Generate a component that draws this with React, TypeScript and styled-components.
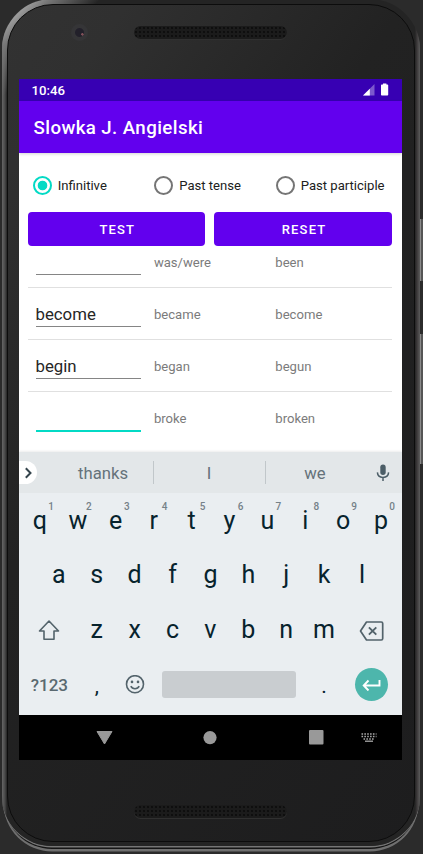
import React from "react";
import styled, { createGlobalStyle } from "styled-components";

const Global = createGlobalStyle`
  * { box-sizing: border-box; }
  body { margin: 0; background: #2b2b2b; font-family: Roboto, sans-serif; }
`;

const Desk = styled.main`
  position: relative;
  width: 423px;
  height: 854px;
  overflow: hidden;
  padding-left: 2px;
  background: #2b2b2b;
`;

const Phone = styled.div`
  position: relative;
  width: 418px;
  height: 847px;
  margin-top: -1px;
  padding: 5px;
  border-radius: 50px;
  background: linear-gradient(90deg, #666 0, #484848 3px, #242424 5px, #242424 413px, #3c393a 415px, #5c5c5c 418px);
  box-shadow: 0 1.5px 0 #757575, 0 5px 0 -2px #151515, 0 7px 0 -1.5px #707070;
  &::before {
    content: "";
    position: absolute;
    inset: 0;
    border-radius: 50px;
    background: linear-gradient(135deg, transparent 0, #9a9a9a 22px, #777 34px, transparent 70px);
  }
`;

const Face = styled.div`
  position: relative;
  display: flex;
  flex-direction: column;
  align-items: center;
  width: 408px;
  height: 838px;
  padding-right: 1px;
  border: 1px solid #0c0c0c;
  border-radius: 46px;
  background: linear-gradient(125deg, #323232 0, #303030 12%, #222 40%, #1d1d1e 100%);
`;

const SideKey = styled.div<{ $top: number; $height: number }>`
  position: absolute;
  left: 420px;
  top: ${(p) => p.$top}px;
  width: 3px;
  height: ${(p) => p.$height}px;
  border-left: 1px solid #8a8a8a;
  background: #555;
`;

const Forehead = styled.div`
  position: relative;
  height: 74px;
  width: 100%;
  flex: none;
  display: flex;
  justify-content: center;
  padding-top: 21px;
`;

const Camera = styled.div`
  position: absolute;
  left: 63px;
  top: 19px;
  width: 17px;
  height: 17px;
  border-radius: 50%;
  background: radial-gradient(circle at 67% 61%, #805058 0 1px, transparent 1.5px),
    radial-gradient(circle, #22202a 0 4px, #353537 5px 100%);
`;

const Grille = styled.div`
  width: 153px;
  height: 13px;
  border-radius: 7px;
  background: radial-gradient(circle, #0b0b0b 0.6px, transparent 1.1px) 0 0 / 4px 4px, #1b1b1b;
  box-shadow: 0 1px 0 #303030;
`;

const Chin = styled.div`
  padding-top: 45px;
`;

const Screen = styled.div`
  display: flex;
  flex-direction: column;
  width: 383px;
  height: 681px;
  flex: none;
  margin-right: 1px;
  background: #fff;
  overflow: hidden;
`;

const StatusBar = styled.div`
  display: flex;
  align-items: center;
  justify-content: space-between;
  height: 22px;
  flex: none;
  padding: 0 13px;
  background: #3700b3;
  color: #fff;
  font-size: 13.2px;
  font-weight: 500;
`;

const AppBar = styled.header`
  position: relative;
  display: flex;
  align-items: center;
  height: 52px;
  flex: none;
  padding: 2px 15px 0;
  background: #6200ee;
  color: #fff;
  font-size: 18.7px;
  font-weight: 500;
  letter-spacing: 0.4px;
  box-shadow: 0 1px 3px rgba(0, 0, 0, 0.18);
`;

const Content = styled.section`
  display: flex;
  flex-direction: column;
  height: 299px;
  flex: none;
  padding: 0 9.7px 0 9px;
  overflow: hidden;
`;

const RadioRow = styled.div`
  display: grid;
  grid-template-columns: 121.5px 121.5px 1fr;
  height: 59px;
  flex: none;
  padding: 5px 0 0 5.2px;
`;

const RadioLabel = styled.div`
  display: flex;
  align-items: center;
  gap: 6px;
  color: #202020;
  font-size: 13.1px;
  white-space: nowrap;
`;

const Dot = styled.span<{ $on?: boolean }>`
  width: 19px;
  height: 19px;
  flex: none;
  border: 2px solid ${(p) => (p.$on ? "#03dac5" : "#757575")};
  border-radius: 50%;
  background: ${(p) => (p.$on ? "radial-gradient(circle, #03dac5 4.4px, #fff 5.2px)" : "#fff")};
`;

const Buttons = styled.div`
  display: grid;
  grid-template-columns: 1fr 1fr;
  gap: 9.3px;
  height: 34.3px;
  flex: none;
`;

const Button = styled.button`
  padding: 0 0 0 2px;
  border: 0;
  border-radius: 4px;
  background: #6200ee;
  color: #fff;
  font: 500 13px Roboto, sans-serif;
  letter-spacing: 1.16px;
`;

const List = styled.div`
  display: flex;
  flex-direction: column;
  justify-content: flex-end;
  height: 198px;
  flex: none;
  overflow: hidden;
`;

const VerbRow = styled.div`
  display: grid;
  grid-template-columns: 126.4px 121.4px 1fr;
  height: 52.1px;
  flex: none;
  border-bottom: 1.4px solid #e0e0e0;
  &:last-child { border-bottom: 0; }
`;

const Field = styled.div<{ $active?: boolean }>`
  width: 105px;
  height: ${(p) => (p.$active ? 40 : 39.2)}px;
  margin-left: 8px;
  padding-top: 15.7px;
  border-bottom: ${(p) => (p.$active ? "2px solid #03dac5" : "1px solid #858585")};
  color: #262626;
  font-size: 16.8px;
  line-height: 20px;
`;

const Form = styled.div`
  padding-top: 17.6px;
  color: #7b7b7b;
  font-size: 13.1px;
  line-height: 17px;
`;

const Suggestions = styled.div`
  display: grid;
  grid-template-columns: 35px 100px 112px 100px 1fr;
  align-items: center;
  height: 41px;
  flex: none;
  background: #e3e7e9;
  box-shadow: 0 -1px 2px rgba(0, 0, 0, 0.08);
`;

const Expand = styled.div`
  display: flex;
  align-items: center;
  width: 18.5px;
  height: 23px;
  padding-left: 2px;
  border-radius: 0 12px 12px 0;
  background: #fff;
`;

const Word = styled.div<{ $divided?: boolean }>`
  height: 23px;
  border-right: 1px solid ${(p) => (p.$divided ? "#c1c7ca" : "transparent")};
  color: #65727a;
  font-size: 16.7px;
  line-height: 25px;
  text-align: center;
`;

const Mic = styled.div`
  display: flex;
  justify-content: center;
  padding-right: 1px;
`;

const Keyboard = styled.div`
  display: flex;
  flex-direction: column;
  height: 222px;
  flex: none;
  padding: 0 1.5px 0 2.5px;
  background: #eaeef1;
  box-shadow: 0 1px 0 #777;
`;

const KeyRow = styled.div<{ $h?: number; $inset?: number }>`
  display: flex;
  height: ${(p) => p.$h ?? 55}px;
  flex: none;
  padding: 0 ${(p) => p.$inset ?? 0}px;
`;

const Key = styled.div<{ $w?: number; $small?: boolean; $low?: boolean }>`
  position: relative;
  display: flex;
  align-items: center;
  justify-content: center;
  width: ${(p) => p.$w ?? 37.9}px;
  flex: none;
  padding-top: ${(p) => (p.$low ? 3 : 0)}px;
  color: ${(p) => (p.$small ? "#5a6970" : "#07232d")};
  font-size: ${(p) => (p.$small ? 17 : p.$low ? 21 : 25)}px;
  font-weight: ${(p) => (p.$small ? 500 : 400)};
`;

const Hint = styled.sup`
  position: absolute;
  left: 27.2px;
  top: 8px;
  color: #758188;
  font-size: 10px;
  font-weight: 500;
  line-height: 12px;
`;

const Space = styled.div`
  width: 134px;
  height: 27px;
  border-radius: 3px;
  background: #c9cdd0;
`;

const Enter = styled.div`
  display: flex;
  align-items: center;
  justify-content: center;
  width: 33px;
  height: 33px;
  border-radius: 50%;
  background: #4db6ac;
`;

const NavBar = styled.nav`
  display: grid;
  grid-template-columns: 53px 53px 53px 53px 53px 53px;
  padding-left: 59px;
  align-items: center;
  height: 45px;
  background: #000;
  > svg { justify-self: center; }
`;

const SignalIcon = () => (
  <svg width="26" height="14" viewBox="0 0 26 14">
    <path d="M11.5 1v11.5H0z" fill="#fff" fillOpacity=".35" />
    <path d="M6.8 5.8v6.7H0z" fill="#fff" />
    <path d="M20 1.5V.5h3.4v1h1c.5 0 .8.3.8.8v9.4c0 .5-.3.8-.8.8h-5.600c-.5 0-.8-.3-.8-.8V2.300c0-.5.3-.8.8-.8z" fill="#fff" />
  </svg>
);

const ChevronIcon = () => (
  <svg width="14" height="14" viewBox="0 0 14 14" fill="none" stroke="#34444c" strokeWidth="2">
    <path d="M4.800 2.200L9.500 7 4.800 11.800" />
  </svg>
);

const MicIcon = () => (
  <svg width="14" height="18" viewBox="0 0 14 18">
    <rect x="4.300" y=".6" width="5.400" height="10.400" rx="2.700" fill="#4c5e67" />
    <path d="M1.400 8.400c.2 3 2.500 5 5.600 5s5.400-2 5.600-5M7 13.500v3.500" fill="none" stroke="#4c5e67" strokeWidth="1.500" />
  </svg>
);

const ShiftIcon = () => (
  <svg width="22" height="22" viewBox="0 0 22 22" fill="none" stroke="#53636b" strokeWidth="1.600" strokeLinejoin="round">
    <path d="M11 2L1.500 12H6v8.300h10v-8.300h4.500z" />
  </svg>
);

const BackspaceIcon = () => (
  <svg width="25" height="22" viewBox="0 0 25 22" fill="none" stroke="#53636b" strokeWidth="1.700">
    <path d="M7.500 3h14.800q1.400 0 1.400 1.400v15.200q0 1.400-1.400 1.400H7.500L1.500 12z" strokeLinejoin="round" />
    <path d="M9.900 8.300l7.400 7.400M17.300 8.300L9.900 15.700" strokeWidth="1.900" />
  </svg>
);

const SmileIcon = () => (
  <svg width="20" height="20" viewBox="0 0 20 20" fill="none" stroke="#53636b" strokeWidth="1.600">
    <circle cx="10" cy="9.200" r="8.500" />
    <path d="M5.800 11.200c.8 1.700 2.300 2.600 4.200 2.600s3.400-.9 4.200-2.600" />
    <circle cx="7" cy="6.900" r="1.300" fill="#53636b" stroke="none" />
    <circle cx="13" cy="6.900" r="1.300" fill="#53636b" stroke="none" />
  </svg>
);

const EnterIcon = () => (
  <svg width="19" height="13" viewBox="0 0 19 13" fill="none" stroke="#fff" strokeWidth="1.900">
    <path d="M17.500 2v5.500H2.200M6.500 2.500L1.700 7.500l4.800 5" />
  </svg>
);

const BackIcon = () => (
  <svg width="17" height="15" viewBox="0 0 17 15">
    <path d="M1 1.500h15L8.500 14z" fill="#999" stroke="#999" strokeLinejoin="round" />
  </svg>
);

const HomeIcon = () => (
  <svg width="14" height="14" viewBox="0 0 14 14"><circle cx="7" cy="6.600" r="6.600" fill="#999" /></svg>
);

const RecentsIcon = () => (
  <svg width="15" height="15" viewBox="0 0 15 15"><rect width="14.500" height="14.500" rx="1" fill="#999" /></svg>
);

const KeyboardIcon = () => (
  <svg width="16" height="9" viewBox="0 0 16 9" fill="none" stroke="#aaa">
    <path d="M.5 1h15M.5 3.500h15M2.500 6h11" strokeWidth="1.300" strokeDasharray="1.600 1.250" />
    <path d="M4 8.200h8" strokeWidth="1.300" />
  </svg>
);

const verbs = [
  { input: "", past: "was/were", participle: "been" },
  { input: "become", past: "became", participle: "become" },
  { input: "begin", past: "began", participle: "begun" },
  { input: "", past: "broke", participle: "broken", active: true },
];

export default function App() {
  return (
    <>
      <Global />
      <Desk>
        <SideKey $top={219} $height={62} />
        <SideKey $top={334} $height={130} />
        <Phone>
          <Face>
            <Forehead>
              <Camera />
              <Grille />
            </Forehead>
            <Screen>
              <StatusBar>
                <span>10:46</span>
                <SignalIcon />
              </StatusBar>
              <AppBar>Slowka J. Angielski</AppBar>
              <Content>
                <RadioRow>
                  <RadioLabel><Dot $on />Infinitive</RadioLabel>
                  <RadioLabel><Dot />Past tense</RadioLabel>
                  <RadioLabel><Dot />Past participle</RadioLabel>
                </RadioRow>
                <Buttons>
                  <Button>TEST</Button>
                  <Button>RESET</Button>
                </Buttons>
                <List>
                  {verbs.map((v) => (
                    <VerbRow key={v.past}>
                      <Field $active={v.active}>{v.input}</Field>
                      <Form>{v.past}</Form>
                      <Form>{v.participle}</Form>
                    </VerbRow>
                  ))}
                </List>
              </Content>
              <Suggestions>
                <Expand><ChevronIcon /></Expand>
                <Word $divided>thanks</Word>
                <Word $divided>I</Word>
                <Word>we</Word>
                <Mic><MicIcon /></Mic>
              </Suggestions>
              <Keyboard>
                <KeyRow $h={54}>
                  {[..."qwertyuiop"].map((c, i) => (
                    <Key key={c}>{c}<Hint>{(i + 1) % 10}</Hint></Key>
                  ))}
                </KeyRow>
                <KeyRow $inset={18.95}>
                  {[..."asdfghjkl"].map((c) => <Key key={c}>{c}</Key>)}
                </KeyRow>
                <KeyRow>
                  <Key $w={56.8}><ShiftIcon /></Key>
                  {[..."zxcvbnm"].map((c) => <Key key={c}>{c}</Key>)}
                  <Key $w={56.8}><BackspaceIcon /></Key>
                </KeyRow>
                <KeyRow>
                  <Key $w={56.8} $small>?123</Key>
                  <Key $low>,</Key>
                  <Key><SmileIcon /></Key>
                  <Key $w={151.6}><Space /></Key>
                  <Key $low>.</Key>
                  <Key $w={56.8}><Enter><EnterIcon /></Enter></Key>
                </KeyRow>
              </Keyboard>
              <NavBar>
                <BackIcon />
                <span />
                <HomeIcon />
                <span />
                <RecentsIcon />
                <KeyboardIcon />
              </NavBar>
            </Screen>
            <Chin><Grille /></Chin>
          </Face>
        </Phone>
      </Desk>
    </>
  );
}
